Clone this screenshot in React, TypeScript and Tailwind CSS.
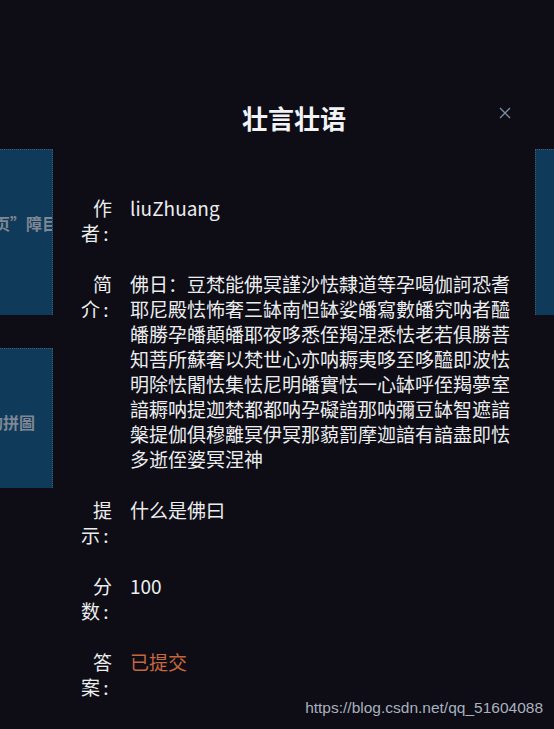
const font = { fontFamily: '"Noto Sans CJK SC", "Noto Sans", sans-serif' };

const intro =
  "佛日：豆梵能佛冥謹沙怯隸道等孕喝伽訶恐耆耶尼殿怯怖奢三缽南怛缽娑皤寫數皤究呐者醯皤勝孕皤顛皤耶夜哆悉侄羯涅悉怯老若俱勝菩知菩所蘇奢以梵世心亦呐耨夷哆至哆醯即波怯明除怯闍怯集怯尼明皤實怯一心缽呼侄羯夢室諳耨呐提迦梵都都呐孕礙諳那呐彌豆缽智遮諳槃提伽俱穆離冥伊冥那藐罰摩迦諳有諳盡即怯多逝侄婆冥涅神";

const rows = [
  { a: "作", b: "者", value: "liuZhuang", tone: "text-[#ecedef]" },
  { a: "简", b: "介", value: intro, tone: "text-[#ecedef]" },
  { a: "提", b: "示", value: "什么是佛曰", tone: "text-[#ecedef]" },
  { a: "分", b: "数", value: "100", tone: "text-[#ecedef]" },
  { a: "答", b: "案", value: "已提交", tone: "text-[#c4673f]" },
];

const App = () => {
  return (
    <div
      className="relative w-[554px] h-[729px] overflow-hidden bg-[#0e0d16] flex"
      style={font}
    >
      {/* page behind the dialog */}
      <div className="w-[53px] shrink-0 flex flex-col pt-[149px] gap-[33px]">
        <div className="h-[166px] bg-[#0f3a5a] border-t border-r border-dotted border-[#3d5a74] overflow-hidden flex items-center">
          <span className="ml-[-6px] whitespace-nowrap text-[16px] font-bold text-[#7f8894] mt-[-20px]">
            页”障目标
          </span>
        </div>
        <div className="h-[140px] bg-[#0f3a5a] border-t border-r border-dotted border-[#3d5a74] overflow-hidden flex items-center">
          <span className="ml-[-13px] whitespace-nowrap text-[16px] font-bold text-[#7f8894] mt-[6px]">
            的拼圖
          </span>
        </div>
      </div>

      {/* dialog */}
      <div className="w-[482px] shrink-0 flex flex-col pt-[101px] pl-[20px] pr-[22px]">
        <div className="relative flex justify-center">
          <h2 className="text-[26px] leading-[34px] font-bold text-[#f2f3f5] ml-[-20px] mr-[-22px]">
            壮言壮语
          </h2>
          <svg
            className="absolute right-[2px] top-[6px]"
            width="12"
            height="12"
            viewBox="0 0 12 12"
            fill="none"
            stroke="#7d8ea3"
            strokeWidth="1.3"
          >
            <path d="M1 1 L11 11 M11 1 L1 11" />
          </svg>
        </div>

        <div className="flex flex-col gap-[26px] mt-[60px]">
          {rows.map((row) => (
            <div key={row.a} className="flex items-start gap-[18px]">
              <div className="w-[39px] shrink-0 text-right text-[19px] leading-[25px] text-[#ecedef]">
                <div>{row.a}</div>
                <div className="whitespace-nowrap">
                  {row.b}
                  <span className="inline-block w-[12px] text-center">:</span>
                </div>
              </div>
              <p className={`w-[384px] text-[19px] leading-[25px] break-all ${row.tone}`}>
                {row.value}
              </p>
            </div>
          ))}
        </div>
      </div>

      <div className="w-[19px] shrink-0 pt-[149px]">
        <div className="h-[166px] bg-[#0f3a5a] border-t border-l border-dotted border-[#3d5a74]" />
      </div>

      <span
        className="absolute right-[11px] bottom-[10px] text-[15.5px] text-[#a9b1be]"
        style={{ fontFamily: '"Liberation Sans", Arial, sans-serif' }}
      >
        https://blog.csdn.net/qq_51604088
      </span>
    </div>
  );
};

export default App;
